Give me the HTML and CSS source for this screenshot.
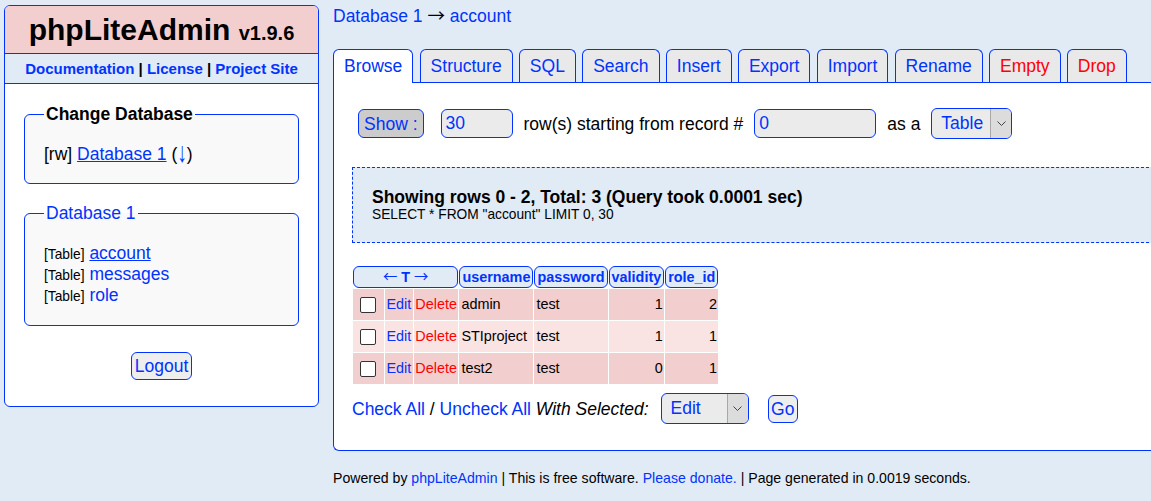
FILE: index.html
```html
<!DOCTYPE html>
<html lang="en">
<head>
<meta charset="utf-8">
<title>phpLiteAdmin</title>
<link rel="stylesheet" href="styles.css">
</head>
<body>
<div class="page">
  <aside class="nav">
    <h1 class="brand">phpLiteAdmin <span class="version">v1.9.6</span></h1>
    <div class="headerlinks"><a href="#">Documentation</a> | <a href="#">License</a> | <a href="#">Project Site</a></div>
    <div class="nav-body">
      <fieldset class="box">
        <legend class="legend-black">Change Database</legend>
        <div class="dbline">[rw] <a href="#" class="current">Database 1</a> (<a href="#" class="arrow-down">↓</a>)</div>
      </fieldset>
      <fieldset class="box box-tables">
        <legend class="legend-blue"><a href="#">Database 1</a></legend>
        <ul class="tables">
          <li><span class="tag">[Table]</span> <a href="#" class="current">account</a></li>
          <li><span class="tag">[Table]</span> <a href="#">messages</a></li>
          <li><span class="tag">[Table]</span> <a href="#">role</a></li>
        </ul>
      </fieldset>
      <div class="logout-row"><button class="btn">Logout</button></div>
    </div>
  </aside>

  <main class="main">
    <h2 class="crumbs"><a href="#">Database 1</a> <span class="arrow">→</span> <a href="#">account</a></h2>
    <nav class="tabs">
      <a href="#" class="tab tab-on">Browse</a>
      <a href="#" class="tab">Structure</a>
      <a href="#" class="tab">SQL</a>
      <a href="#" class="tab">Search</a>
      <a href="#" class="tab">Insert</a>
      <a href="#" class="tab">Export</a>
      <a href="#" class="tab">Import</a>
      <a href="#" class="tab">Rename</a>
      <a href="#" class="tab danger">Empty</a>
      <a href="#" class="tab danger">Drop</a>
    </nav>
    <div class="panel">
      <div class="controls">
        <button class="btn btn-show">Show :</button>
        <input class="field field-num" type="text" value="30">
        <span class="label">row(s) starting from record #</span>
        <input class="field field-start" type="text" value="0">
        <span class="label">as a</span>
        <span class="select select-table"><span class="val">Table</span><span class="caret"><svg width="9" height="5" viewBox="0 0 9 5"><polyline points="0.5,0.5 4.5,4.5 8.5,0.5" fill="none" stroke="#444" stroke-width="1"/></svg></span></span>
      </div>

      <div class="result">
        <div class="result-title">Showing rows 0 - 2, Total: 3 (Query took 0.0001 sec)</div>
        <div class="result-sql">SELECT * FROM "account" LIMIT 0, 30</div>
      </div>

      <table class="grid">
        <thead>
          <tr>
            <th colspan="3" class="th"><a href="#" class="arrow">←</a> <a href="#">T</a> <a href="#" class="arrow">→</a></th>
            <th class="th"><a href="#">username</a></th>
            <th class="th"><a href="#">password</a></th>
            <th class="th"><a href="#">validity</a></th>
            <th class="th"><a href="#">role_id</a></th>
          </tr>
        </thead>
        <tbody>
          <tr class="r-dark">
            <td class="cb"><input type="checkbox" class="check"></td>
            <td><a href="#">Edit</a></td>
            <td><a href="#" class="del">Delete</a></td>
            <td class="left">admin</td>
            <td class="left">test</td>
            <td>1</td>
            <td>2</td>
          </tr>
          <tr class="r-light">
            <td class="cb"><input type="checkbox" class="check"></td>
            <td><a href="#">Edit</a></td>
            <td><a href="#" class="del">Delete</a></td>
            <td class="left">STIproject</td>
            <td class="left">test</td>
            <td>1</td>
            <td>1</td>
          </tr>
          <tr class="r-dark">
            <td class="cb"><input type="checkbox" class="check"></td>
            <td><a href="#">Edit</a></td>
            <td><a href="#" class="del">Delete</a></td>
            <td class="left">test2</td>
            <td class="left">test</td>
            <td>0</td>
            <td>1</td>
          </tr>
        </tbody>
      </table>

      <div class="actions">
        <a href="#">Check All</a>&nbsp;/&nbsp;<a href="#">Uncheck All</a>&nbsp;<em>With Selected:</em>
        <span class="select select-edit"><span class="val">Edit</span><span class="caret"><svg width="9" height="5" viewBox="0 0 9 5"><polyline points="0.5,0.5 4.5,4.5 8.5,0.5" fill="none" stroke="#444" stroke-width="1"/></svg></span></span>
        <button class="btn btn-go">Go</button>
      </div>
    </div>
    <div class="footer">Powered by <a href="#">phpLiteAdmin</a> | This is free software. <a href="#">Please donate.</a> | Page generated in 0.0019 seconds.</div>
  </main>
</div>
</body>
</html>
```

FILE: styles.css
```css
html, body {
  margin: 0;
  padding: 0;
  overflow: hidden;
}
body {
  background: #e0ebf6;
  font-family: "Liberation Sans", Arial, sans-serif;
  font-size: 17.5px;
  line-height: 20px;
  color: #000;
}
a {
  color: #03f;
  text-decoration: none;
}
a.current {
  text-decoration: underline;
}
.arrow {
  font-family: "Noto Sans CJK JP", "DejaVu Sans", sans-serif;
  line-height: 1;
}
.arrow-down {
  display: inline-block;
  font-size: 19px;
  line-height: 20px;
  transform: scaleY(1.5);
  transform-origin: 50% 60%;
}

.page {
  display: flex;
  align-items: flex-start;
  gap: 14px;
  padding: 5px 0 0 4px;
}

/* ---------- left nav ---------- */
.nav {
  flex: none;
  width: 313px;
  background: #fff;
  border: 1px solid #03f;
  border-radius: 6px;
}
.brand {
  margin: 0;
  padding: 6px;
  height: 35px;
  font-size: 30px;
  line-height: 35px;
  font-weight: bold;
  text-align: center;
  background: #f3cece;
  border-radius: 5px 5px 0 0;
}
.version {
  font-size: 20px;
  line-height: 20px;
}
.headerlinks {
  border-top: 1px solid #03f;
  border-bottom: 1px solid #03f;
  background: #e0ebf6;
  padding: 6px 0;
  height: 17px;
  font-size: 15px;
  line-height: 17px;
  font-weight: bold;
  text-align: center;
}
.nav-body {
  padding: 20px 19px 26px;
}
.box {
  margin: 0;
  padding: 20px 19px 19px;
  border: 1px solid #03f;
  border-radius: 6px;
  background: #f9f9f9;
}
.box-tables {
  margin-top: 19px;
}
.box legend {
  padding: 0 2px;
  line-height: 20px;
  height: 20px;
}
.legend-black {
  font-weight: bold;
}
.dbline {
  height: 20px;
}
.tables {
  list-style: none;
  margin: 0;
  padding: 0;
}
.tables li {
  height: 21px;
  line-height: 21px;
}
.tag {
  font-size: 13.75px;
}
.logout-row {
  margin-top: 26px;
  display: flex;
  justify-content: center;
}

/* ---------- buttons & fields ---------- */
.btn {
  font-family: inherit;
  font-size: 17.5px;
  line-height: 20px;
  color: #03f;
  background: #eee;
  border: 1px solid #03f;
  border-radius: 6px;
  padding: 3px 3px;
  margin: 0;
}
.btn-show {
  background: #ccc;
  padding: 3.5px 5px;
  margin-right: 6px;
}
.btn-go {
  padding: 3px 2.5px;
  margin-left: 19px;
}
.field {
  font-family: inherit;
  font-size: 17.5px;
  line-height: 20px;
  color: #03f;
  background: #ebebeb;
  border: 1px solid #03f;
  border-radius: 6px;
  padding: 3.5px 4px;
  margin: 0;
  box-sizing: border-box;
  height: 29px;
}
.field-num { width: 72px; }
.field-start { width: 122px; }

.select {
  display: inline-flex;
  height: 31px;
  box-sizing: border-box;
  border: 1px solid #03f;
  border-radius: 6px;
  overflow: hidden;
  background: #ebebeb;
  color: #03f;
}
.select .val {
  line-height: 29px;
  padding-left: 9px;
  box-sizing: border-box;
}
.select .caret {
  width: 20px;
  border-left: 1px solid #a8a8a8;
  background: #dcdcdc;
  display: flex;
  align-items: center;
  justify-content: center;
}
.select-table .val { width: 58px; }
.select-edit .val { width: 65px; }

/* ---------- main ---------- */
.main {
  flex: none;
  width: 840px;
}
.crumbs {
  margin: 1px 0 23px;
  height: 20px;
  font-size: 17.5px;
  line-height: 20px;
  font-weight: normal;
}
.tabs {
  display: flex;
  align-items: flex-end;
  gap: 6.25px;
}
.tab {
  display: block;
  padding: 6px 10px;
  line-height: 20px;
  background: #e9e9e9;
  border: 1px solid #03f;
  border-bottom: none;
  border-radius: 6px 6px 0 0;
}
.tab.tab-on {
  background: #fff;
  padding-bottom: 7px;
  margin-bottom: -1px;
  position: relative;
  z-index: 1;
}
.tab.danger {
  color: #f00;
}
.panel {
  background: #fff;
  border: 1px solid #03f;
  border-right: none;
  border-radius: 0 0 0 6px;
  padding: 19px 19px 19px 18px;
}
.controls {
  display: flex;
  align-items: center;
  gap: 11px;
  margin: 6px 0 0 6px;
}
.result {
  margin-top: 28px;
  border: 1px dashed #03f;
  border-right: none;
  background: #e0ebf6;
  padding: 19px;
}
.result-title {
  font-weight: bold;
  line-height: 20px;
}
.result-sql {
  font-size: 13.75px;
  line-height: 16px;
}

.grid {
  margin-top: 22px;
  border-collapse: separate;
  border-spacing: 1px;
}
.th {
  background: #e0ebf6;
  border: 1px solid #03f;
  border-radius: 6px;
  font-size: 14.4px;
  line-height: 18px;
  height: 18px;
  font-weight: bold;
  padding: 1px 2px;
  text-align: center;
}
.th .arrow {
  font-weight: normal;
}
.grid td {
  font-size: 14.4px;
  line-height: 17px;
  padding: 7px 1.5px;
  text-align: right;
}
.grid td.left {
  text-align: left;
  padding-left: 2px;
  padding-right: 3px;
}
.grid td.cb {
  padding: 0 8px 0 7px;
  line-height: 0;
}
.check {
  appearance: none;
  -webkit-appearance: none;
  display: block;
  width: 16px;
  height: 16px;
  margin: 0;
  border: 1px solid #333;
  border-radius: 2px;
  background: #fff;
  box-sizing: border-box;
}
.r-dark td { background: #f3cece; }
.r-light td { background: #f9e3e3; }
.del { color: #f00; }

.actions {
  display: flex;
  align-items: center;
  margin-top: 8px;
  margin-bottom: 7px;
  white-space: pre;
}
.actions em {
  margin-right: 12px;
}

.footer {
  margin-top: 19px;
  font-size: 14.1px;
  line-height: 16px;
}
```
